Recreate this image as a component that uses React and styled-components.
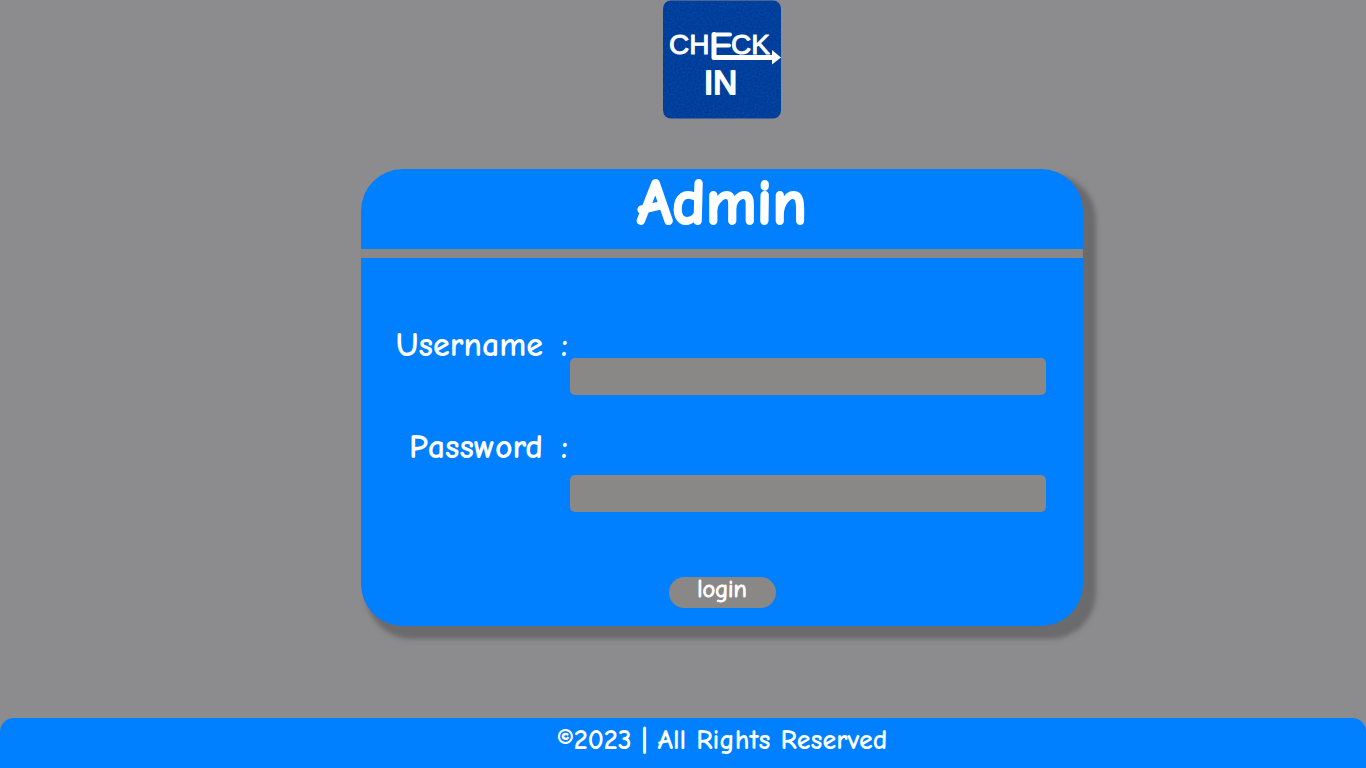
import React from "react";
import styled, { createGlobalStyle } from "styled-components";

const GlobalStyle = createGlobalStyle`
  *, *::before, *::after { box-sizing: border-box; }
  body {
    margin: 0;
    background: #8c8c8e;
    color: #fff;
    font-family: "Comic Sans MS", "Comic Neue", Lato, sans-serif;
  }
`;

const Page = styled.div`
  min-height: 100vh;
  display: flex;
  flex-direction: column;
`;

const Main = styled.main`
  flex: 1;
  display: flex;
  flex-direction: column;
  align-items: center;
  gap: 50px;
  padding: 0 0 40px 78px;
`;

const Logo = styled.svg`
  display: block;
  width: 119px;
  height: 119px;
`;

const Card = styled.form`
  width: 100%;
  max-width: 722px;
  border-radius: 42px;
  background: #007fff;
  box-shadow: 9px 9px 5px 4px #6b6b6d;
`;

const CardTitle = styled.h1`
  margin: 0;
  padding-bottom: 12px;
  border-bottom: 9px solid #8a8787;
  font-size: 64px;
  line-height: 68px;
  font-weight: 900;
  text-align: center;
  -webkit-text-stroke: 2px #fff;
`;

const CardBody = styled.div`
  display: flex;
  flex-direction: column;
  gap: 32px;
  padding: 67px 37px 18px 24px;
`;

const Field = styled.div`
  display: grid;
  grid-template-columns: 185px 1fr;
  min-height: ${(p) => (p.$tall ? 85 : 70)}px;
`;

const Label = styled.label`
  display: flex;
  justify-content: flex-end;
  gap: 18px;
  padding-right: 2px;
  font-size: 34px;
  line-height: 40px;
  font-weight: 700;
`;

const Input = styled.input`
  align-self: end;
  width: 100%;
  height: 37px;
  padding: 0 10px;
  border: 0;
  border-radius: 5px;
  background: #8a8787;
  color: #fff;
  font: inherit;
  font-size: 24px;
`;

const LoginButton = styled.button`
  align-self: center;
  width: 107px;
  height: 31px;
  margin: 33px 0 0 13px;
  padding: 0 0 6px;
  border: 0;
  border-radius: 16px;
  background: #8a8787;
  color: #fff;
  font: inherit;
  font-size: 24px;
  line-height: 25px;
  -webkit-text-stroke: 1px #fff;
  cursor: pointer;
`;

const Footer = styled.footer`
  padding: 8px 0 14px 78px;
  border-radius: 14px 14px 0 0;
  background: #007fff;
  font-size: 28px;
  line-height: 28px;
  font-weight: 700;
  text-align: center;
`;

function CheckInLogo() {
  return (
    <Logo viewBox="0 0 119 119" role="img" aria-label="Check in">
      <defs>
        <filter id="grain" x="0" y="0" width="100%" height="100%" colorInterpolationFilters="sRGB">
          <feTurbulence type="fractalNoise" baseFrequency="0.5" numOctaves="2" result="noise" />
          <feColorMatrix
            in="noise"
            type="matrix"
            values="0 0 0 0 0  0.12 0 0 0 0.19  0.16 0 0 0 0.53  0 0 0 0 1"
            result="tint"
          />
          <feComposite in="tint" in2="SourceGraphic" operator="in" />
        </filter>
      </defs>
      <rect x="0" y="0.5" width="118" height="118" rx="8" fill="#003f9b" filter="url(#grain)" />
      <g fill="#fff" stroke="#fff" strokeLinejoin="round" fontFamily="Liberation Sans, Arial, sans-serif">
        <text x="6" y="54" fontSize="28" strokeWidth="1">CH</text>
        <text x="68" y="54" fontSize="28" strokeWidth="1">CK</text>
        <text x="41" y="94" fontSize="33" strokeWidth="2">IN</text>
      </g>
      <g fill="none" stroke="#fff" strokeWidth="4" strokeLinecap="round" strokeLinejoin="round">
        <path strokeWidth="5" d="M51 34.5V57.5H109" />
        <path d="M67 34.5H51" />
        <path d="M51 45.5H66" />
      </g>
      <path d="M109 50L118 57.5L109 64.5Z" fill="#fff" />
    </Logo>
  );
}

function FormField({ id, label, type, tall }) {
  return (
    <Field $tall={tall}>
      <Label htmlFor={id}>
        <span>{label}</span>
        <span>:</span>
      </Label>
      <Input id={id} name={id} type={type} />
    </Field>
  );
}

export default function App() {
  return (
    <>
      <GlobalStyle />
      <Page>
        <Main>
          <CheckInLogo />
          <Card onSubmit={(e) => e.preventDefault()}>
            <CardTitle>Admin</CardTitle>
            <CardBody>
              <FormField id="username" label="Username" type="text" />
              <FormField id="password" label="Password" type="password" tall />
              <LoginButton type="submit">login</LoginButton>
            </CardBody>
          </Card>
        </Main>
        <Footer>©2023 | All Rights Reserved</Footer>
      </Page>
    </>
  );
}
